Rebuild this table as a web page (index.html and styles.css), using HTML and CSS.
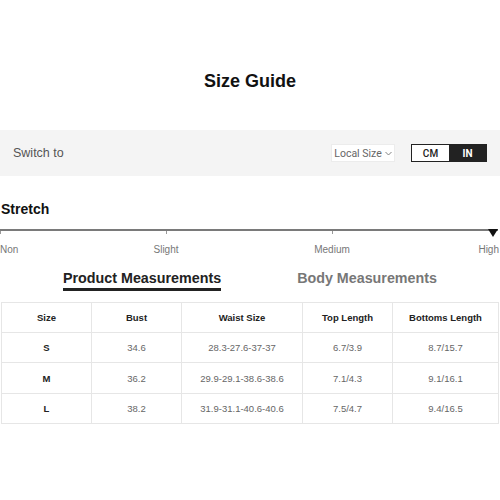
FILE: index.html
```html
<!DOCTYPE html>
<html>
<head>
<meta charset="utf-8">
<link rel="stylesheet" href="styles.css">
</head>
<body>
<div class="header"><h1 class="title">Size Guide</h1></div>
<div class="switch-bar">
  <span class="switch-label">Switch to</span>
  <div class="switch-controls">
    <div class="local-size">Local Size <svg class="chev" width="7" height="5" viewBox="0 0 7 5"><path d="M0.5 1 L3.5 4 L6.5 1" fill="none" stroke="#777" stroke-width="0.9"/></svg></div>
    <div class="unit-toggle">
      <span class="unit">CM</span>
      <span class="unit active">IN</span>
    </div>
  </div>
</div>
<h2 class="stretch-title">Stretch</h2>
<div class="scale">
  <div class="stop first"><span class="tick"></span><span class="stop-label">Non</span></div>
  <div class="stop"><span class="tick"></span><span class="stop-label">Slight</span></div>
  <div class="stop"><span class="tick"></span><span class="stop-label">Medium</span></div>
  <div class="stop last"><span class="marker"></span><span class="stop-label">High</span></div>
</div>
<div class="tabs">
  <span class="tab active">Product Measurements</span>
  <span class="tab">Body Measurements</span>
</div>
<table class="size-table">
  <colgroup>
    <col class="c1"><col class="c2"><col class="c3"><col class="c4"><col class="c5">
  </colgroup>
  <thead>
    <tr class="head-row"><th>Size</th><th>Bust</th><th>Waist Size</th><th>Top Length</th><th>Bottoms Length</th></tr>
  </thead>
  <tbody>
    <tr class="r1"><td class="sz">S</td><td>34.6</td><td>28.3-27.6-37-37</td><td>6.7/3.9</td><td>8.7/15.7</td></tr>
    <tr class="r2"><td class="sz">M</td><td>36.2</td><td>29.9-29.1-38.6-38.6</td><td>7.1/4.3</td><td>9.1/16.1</td></tr>
    <tr class="r3"><td class="sz">L</td><td>38.2</td><td>31.9-31.1-40.6-40.6</td><td>7.5/4.7</td><td>9.4/16.5</td></tr>
  </tbody>
</table>
</body>
</html>
```
FILE: styles.css
```css
html, body {
  margin: 0;
  padding: 0;
  background: #fff;
}
body {
  font-family: "Liberation Sans", Arial, sans-serif;
  color: #222;
  width: 500px;
}
.header {
  padding-top: 70px;
  text-align: center;
}
.title {
  margin: 0;
  font-size: 18px;
  line-height: 22px;
  font-weight: bold;
  color: #111;
}
.switch-bar {
  margin-top: 38px;
  height: 46px;
  background: #f4f4f4;
  display: flex;
  align-items: center;
  justify-content: space-between;
  padding: 0 13px;
}
.switch-label {
  font-size: 12.5px;
  color: #555;
}
.switch-controls {
  display: flex;
  align-items: center;
  gap: 16px;
}
.local-size {
  height: 18px;
  width: 64px;
  box-sizing: border-box;
  background: #fff;
  border: 1px solid #ececec;
  display: flex;
  align-items: center;
  justify-content: center;
  gap: 3px;
  font-family: Roboto, "Liberation Sans", sans-serif;
  font-size: 10.5px;
  color: #666;
}
.chev { display: block; margin-top: 1px; }
.unit-toggle {
  display: flex;
  border: 1px solid #222;
  height: 18px;
  box-sizing: border-box;
}
.unit {
  width: 37px;
  display: flex;
  align-items: center;
  justify-content: center;
  font-family: Roboto, "Liberation Sans", sans-serif;
  font-size: 10px;
  font-weight: 500;
  color: #222;
  background: #fff;
}
.unit.active {
  background: #222;
  color: #fff;
  font-weight: bold;
}
.stretch-title {
  margin: 24px 0 0 1px;
  font-size: 14px;
  line-height: 18px;
  font-weight: bold;
  color: #111;
}
.scale {
  margin-top: 11px;
  width: 498px;
  border-top: 2px solid #7a7a7a;
  display: flex;
  justify-content: space-between;
}
.stop {
  width: 0;
  display: flex;
  flex-direction: column;
  align-items: center;
}
.stop.first { align-items: flex-start; }
.stop.last { align-items: flex-end; }
.tick {
  display: block;
  width: 1px;
  height: 3px;
  background: #999;
  margin-bottom: 10px;
}
.marker {
  display: block;
  width: 0;
  height: 0;
  border-left: 5px solid transparent;
  border-right: 5px solid transparent;
  border-top: 8px solid #111;
  margin-top: -2px;
  margin-bottom: 7px;
}
.stop-label {
  font-size: 10px;
  line-height: 12px;
  color: #777;
  white-space: nowrap;
}
.stop.last .stop-label { margin-right: -1px; }
.tabs {
  margin-top: 13px;
  display: flex;
  justify-content: center;
  gap: 76px;
}
.tab {
  font-size: 14.3px;
  line-height: 18px;
  font-weight: bold;
  color: #777;
  padding-bottom: 1px;
  border-bottom: 3px solid transparent;
}
.tab.active {
  color: #222;
  border-bottom-color: #222;
}
.size-table {
  margin: 11px 0 0 1px;
  width: 497px;
  border-collapse: collapse;
  table-layout: fixed;
  font-size: 9.5px;
}
.c1 { width: 90px; }
.c2 { width: 90px; }
.c3 { width: 121px; }
.c4 { width: 90px; }
.c5 { width: 106px; }
.size-table th, .size-table td {
  border: 1px solid #e6e6e6;
  text-align: center;
  padding: 0;
  white-space: nowrap;
}
.size-table th {
  font-weight: bold;
  color: #222;
}
.size-table td {
  color: #666;
}
.size-table td.sz {
  font-weight: bold;
  color: #222;
}
.head-row { height: 30px; }
.r1 { height: 30px; }
.r2 { height: 31px; }
.r3 { height: 30px; }
```
